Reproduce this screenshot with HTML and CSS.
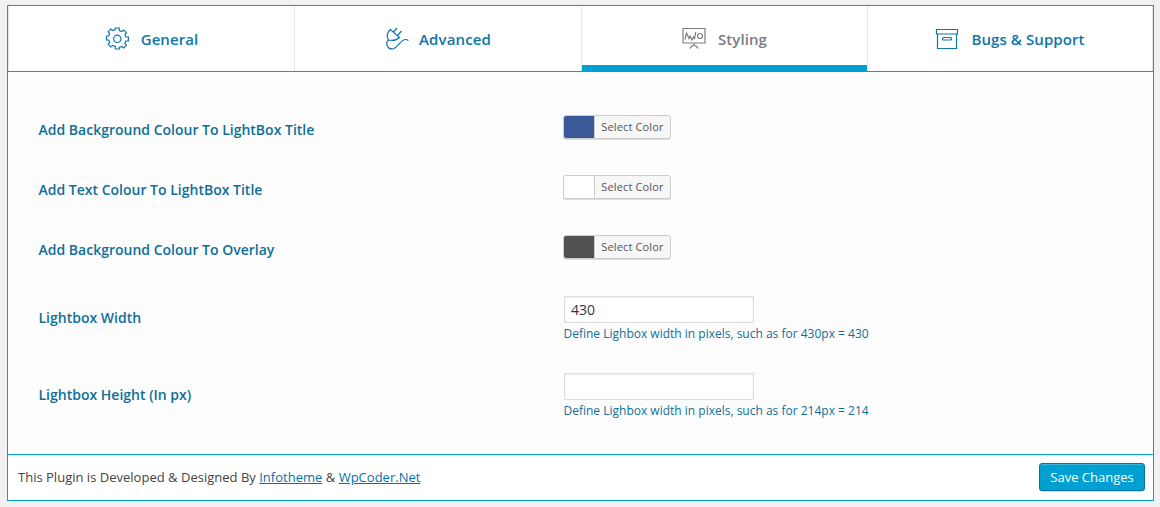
FILE: index.html
```html
<!DOCTYPE html>
<html lang="en">
<head>
<meta charset="utf-8">
<title>Plugin Settings</title>
<link rel="stylesheet" href="styles.css">
</head>
<body>
<form class="panel">
  <nav class="tabs">
    <a class="tab tab-general">
      <svg class="icon" width="24" height="24" viewBox="0 0 24 24"><path d="M10.300 1h4v2.500l2.500 1 1.900-1.500 2.700 2.700-1.500 1.900 1 2.400h2.500v4h-2.500l-1 2.400 1.500 1.900-2.700 2.700-1.900-1.500-2.500 1V22h-4v-2.500l-2.500-1-1.900 1.500-2.700-2.700 1.500-1.900-1-2.400H1.500v-4H3.700l1-2.400-1.500-1.900 2.700-2.700 1.900 1.500 2.500-1z"/><circle cx="12.300" cy="11.800" r="3.700"/></svg>
      <span>General</span>
    </a>
    <a class="tab tab-advanced">
      <svg class="icon" width="24" height="24" viewBox="0 0 24 24"><path d="M5.500 2.500C2 5.500 1.500 9.500 3.500 13c3.500.8 8 .5 11-2.500zM8.500 5l3.500-4M12.500 8.500l4-4.500M3.500 13C.5 15 1.500 22 7.500 22c4.500 0 8-9.500 13-9.500 1.300 0 2 .3 3 1"/></svg>
      <span>Advanced</span>
    </a>
    <a class="tab tab-styling active">
      <svg class="icon" width="24" height="24" viewBox="0 0 24 24"><path d="M1 1.500h22v14.500H1zM12 16v2.500M8 21.500c1-2 2.500-3 4-3s3 1 4 3M3 12.500l1.500-6.500 2.500 5.500 1-2.500 2 4 1.500-3 1 1.500L13.800 5"/><circle cx="18" cy="9" r="2.500"/></svg>
      <span>Styling</span>
    </a>
    <a class="tab tab-support">
      <svg class="icon" width="24" height="24" viewBox="0 0 24 24"><path d="M1.500 2.500h21v4.500h-21zM2.500 7v14.500h19V7"/><rect x="7.500" y="10.500" width="9" height="2.500" rx="1"/></svg>
      <span>Bugs &amp; Support</span>
    </a>
  </nav>
  <section class="settings">
    <div class="row"><span class="label">Add Background Colour To LightBox Title</span><button type="button" class="picker"><i class="swatch blue"></i><span>Select Color</span></button></div>
    <div class="row"><span class="label">Add Text Colour To LightBox Title</span><button type="button" class="picker"><i class="swatch white"></i><span>Select Color</span></button></div>
    <div class="row"><span class="label">Add Background Colour To Overlay</span><button type="button" class="picker"><i class="swatch dark"></i><span>Select Color</span></button></div>
    <div class="row tall"><span class="label">Lightbox Width</span><div class="field"><input class="input" value="430"><p class="hint">Define Lighbox width in pixels, such as for 430px = 430</p></div></div>
    <div class="row tall"><span class="label">Lightbox Height (In px)</span><div class="field"><input class="input" value=""><p class="hint">Define Lighbox width in pixels, such as for 214px = 214</p></div></div>
  </section>
  <footer class="footer">
    <p class="credit">This Plugin is Developed &amp; Designed By <a class="link">Infotheme</a> &amp; <a class="link">WpCoder.Net</a></p>
    <button type="button" class="save">Save Changes</button>
  </footer>
</form>
</body>
</html>
```
FILE: styles.css
```css
* { box-sizing: border-box; }
body {
  margin: 0;
  padding: 5px 6px 0 7px;
  height: 507px;
  overflow: hidden;
  background: #f1f1f1;
  font-family: "Open Sans", sans-serif;
  color: #444;
}
.panel {
  display: flex;
  flex-direction: column;
  height: 496px;
  border: 1px solid #00a0d2;
  background: #fdfdfd;
}
.tabs {
  display: grid;
  grid-template-columns: 286px 287px 286px 286px;
  height: 66px;
  background: #fff;
  border-bottom: 1px solid #00a0d2;
}
.tab {
  display: flex;
  align-items: center;
  justify-content: center;
  gap: 12px;
  border-left: 1px solid #e7e7e7;
  color: #0e76a8;
  font-size: 15px;
  font-weight: 600;
  line-height: 24px;
  letter-spacing: .08px;
}
.tab:last-child { border-right: 1px solid #e7e7e7; }
.tab-advanced { gap: 10px; letter-spacing: .15px; }
.active {
  color: #7b7d80;
  box-shadow: inset 0 -6px #00a0d2;
}
.icon {
  fill: none;
  stroke: currentColor;
  stroke-width: 1.2;
}
.settings {
  flex: 1;
  padding: 26px 30px 0;
}
.row {
  display: grid;
  grid-template-columns: 525px 1fr;
  align-items: start;
  height: 60px;
  padding-top: 17px;
}
.tall { height: 77px; padding-top: 18px; }
.label {
  padding: 5px 0 0 .5px;
  color: #0e6f98;
  font-size: 14px;
  font-weight: 600;
  line-height: 20px;
}
.tall .label { padding-top: 12px; }
.picker {
  display: flex;
  justify-self: start;
  width: 108px;
  height: 24px;
  padding: 0;
  overflow: hidden;
  border: 1px solid #ccc;
  border-radius: 3px;
  background: #f7f7f7;
  box-shadow: 0 1px 0 #ddd;
  color: #555;
  font: 11px/22px "Open Sans", sans-serif;
  letter-spacing: .15px;
}
.picker span { flex: 1; border-left: 1px solid #ccc; }
.swatch { width: 30px; height: 22px; }
.blue { background: #3b5998; }
.white { background: #fff; }
.dark { background: #515151; }
.field { padding-left: 1px; }
.input {
  display: block;
  width: 190px;
  height: 27px;
  padding: 0 6px;
  border: 1px solid #ddd;
  background: #fff;
  box-shadow: inset 0 1px 2px rgba(0, 0, 0, .07);
  color: #32373c;
  font: 14px "Open Sans", sans-serif;
}
.hint {
  margin: 2px 0 0 -.5px;
  color: #0e6f98;
  font-size: 12px;
  font-weight: 500;
  line-height: 18px;
}
.footer {
  display: flex;
  justify-content: space-between;
  align-items: flex-start;
  height: 46px;
  padding: 8px 8px 0 10px;
  border-top: 1px solid #00a0d2;
  background: #fff;
}
.credit { margin: 0; font-size: 13px; line-height: 28px; letter-spacing: .01px; }
.link { color: #0073aa; text-decoration: underline; }
.save {
  width: 106px;
  height: 28px;
  padding: 0;
  border: 1px solid #0073aa;
  border-radius: 3px;
  background: #00a0d2;
  box-shadow: inset 0 1px 0 rgba(120, 200, 230, .5), 0 1px 0 rgba(0, 0, 0, .15);
  color: #fff;
  font: 13px "Open Sans", sans-serif;
}
```
